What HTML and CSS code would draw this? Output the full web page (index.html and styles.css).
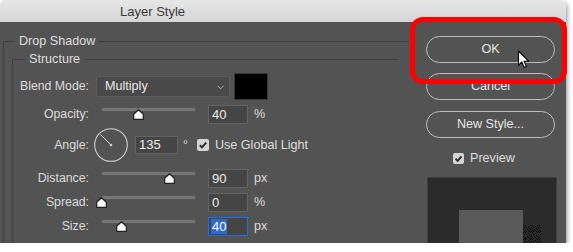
FILE: index.html
```html
<!DOCTYPE html>
<html>
<head>
<meta charset="utf-8">
<link rel="stylesheet" href="styles.css">
</head>
<body>
<div class="window">
  <div class="titlebar">Layer Style</div>
  <div class="body">
    <div class="left">
      <div class="group outer">
        <div class="group-title">Drop Shadow</div>
        <div class="group inner">
          <div class="group-title">Structure</div>
          <div class="row blend">
            <span class="label">Blend Mode:</span>
            <div class="select"><span>Multiply</span><svg class="chev" width="7" height="5" viewBox="0 0 7 5"><polyline points="0.5,0.8 3.5,3.8 6.5,0.8" fill="none" stroke="#b5b5b5" stroke-width="1"/></svg></div>
            <div class="swatch"></div>
          </div>
          <div class="row opacity">
            <span class="label">Opacity:</span>
            <div class="slider"><span class="thumb" style="left:39%"><svg width="11" height="11" viewBox="0 0 11 11"><path d="M5.5 0.8 L10.3 5.2 L10.3 10.3 L0.7 10.3 L0.7 5.2 Z" fill="#fff" stroke="#1e1e1e" stroke-width="1.2" stroke-linejoin="round"/></svg></span></div>
            <div class="field">40</div><span class="unit">%</span>
          </div>
          <div class="row angle">
            <span class="label">Angle:</span>
            <svg class="dial" width="34" height="34" viewBox="0 0 34 34"><circle cx="17" cy="17" r="16.3" fill="none" stroke="#cfcfcf" stroke-width="1.1"/><line x1="6.5" y1="6.5" x2="17" y2="17" stroke="#cfcfcf" stroke-width="1"/><circle cx="17" cy="17" r="1.3" fill="#cfcfcf"/></svg>
            <div class="field wide">135</div><span class="deg">°</span>
            <span class="cb"><svg width="12" height="12" viewBox="0 0 12 12"><polyline points="2.8,6.2 5,8.4 9.2,3.6" fill="none" stroke="#2b2b2b" stroke-width="2"/></svg></span>
            <span class="cb-label">Use Global Light</span>
          </div>
          <div class="row sl first">
            <span class="label">Distance:</span>
            <div class="slider"><span class="thumb" style="left:73%"><svg width="11" height="11" viewBox="0 0 11 11"><path d="M5.5 0.8 L10.3 5.2 L10.3 10.3 L0.7 10.3 L0.7 5.2 Z" fill="#fff" stroke="#1e1e1e" stroke-width="1.2" stroke-linejoin="round"/></svg></span></div>
            <div class="field">90</div><span class="unit">px</span>
          </div>
          <div class="row sl">
            <span class="label">Spread:</span>
            <div class="slider"><span class="thumb" style="left:-1%"><svg width="11" height="11" viewBox="0 0 11 11"><path d="M5.5 0.8 L10.3 5.2 L10.3 10.3 L0.7 10.3 L0.7 5.2 Z" fill="#fff" stroke="#1e1e1e" stroke-width="1.2" stroke-linejoin="round"/></svg></span></div>
            <div class="field">0</div><span class="unit">%</span>
          </div>
          <div class="row sl">
            <span class="label">Size:</span>
            <div class="slider"><span class="thumb" style="left:21%"><svg width="11" height="11" viewBox="0 0 11 11"><path d="M5.5 0.8 L10.3 5.2 L10.3 10.3 L0.7 10.3 L0.7 5.2 Z" fill="#fff" stroke="#1e1e1e" stroke-width="1.2" stroke-linejoin="round"/></svg></span></div>
            <div class="field focus"><span class="sel">40</span></div><span class="unit">px</span>
          </div>
        </div>
      </div>
    </div>
    <div class="actions">
      <div class="btn">OK</div>
      <div class="btn cancel">Cancel</div>
      <div class="btn newstyle">New Style...</div>
      <div class="preview-toggle">
        <span class="cb small"><svg width="11" height="11" viewBox="0 0 11 11"><polyline points="2.5,5.7 4.6,7.8 8.5,3.3" fill="none" stroke="#2b2b2b" stroke-width="1.9"/></svg></span>
        <span class="cb-label">Preview</span>
      </div>
      <div class="preview">
        <div class="preview-square"></div>
        <svg class="preview-shadow" width="18" height="40" viewBox="0 0 18 40">
          <defs>
            <pattern id="noise" width="7" height="7" patternUnits="userSpaceOnUse">
              <rect x="0" y="0" width="1" height="1" fill="#000"/>
              <rect x="2" y="0" width="1" height="1" fill="#000"/>
              <rect x="5" y="1" width="1" height="1" fill="#000"/>
              <rect x="1" y="2" width="1" height="1" fill="#000"/>
              <rect x="3" y="2" width="1" height="1" fill="#000"/>
              <rect x="6" y="3" width="1" height="1" fill="#000"/>
              <rect x="0" y="4" width="1" height="1" fill="#000"/>
              <rect x="4" y="4" width="1" height="1" fill="#000"/>
              <rect x="2" y="5" width="1" height="1" fill="#000"/>
              <rect x="5" y="5" width="1" height="1" fill="#000"/>
              <rect x="1" y="6" width="1" height="1" fill="#000"/>
              <rect x="3" y="6" width="1" height="1" fill="#000"/>
              <rect x="6" y="6" width="1" height="1" fill="#000"/>
            </pattern>
          </defs>
          <rect x="0" y="0" width="18" height="40" fill="url(#noise)"/>
        </svg>
      </div>
    </div>
  </div>
  <div class="highlight"></div>
  <svg class="cursor" width="13" height="19" viewBox="0 0 13 19"><path d="M1.5 1 L1.5 15.2 L4.8 12 L7.2 17.6 L9.4 16.6 L7.1 11.2 L11.6 11.2 Z" fill="#fff" stroke="#000" stroke-width="1.1" stroke-linejoin="round"/></svg>
</div>
</body>
</html>
```

FILE: styles.css
```css
html, body {
  margin: 0;
  background: #ffffff;
}

body {
  font-family: "Liberation Sans", Arial, sans-serif;
}

.window {
  position: relative;
  width: 566px;
  height: 243px;
  border-radius: 6px 6px 0 0;
  box-shadow: 1px 2px 5px rgba(0, 0, 0, 0.45);
}

.titlebar {
  height: 22px;
  box-sizing: border-box;
  padding-left: 120px;
  line-height: 23px;
  font-size: 13px;
  color: #3a3a3a;
  background: linear-gradient(#e7e7e7, #d5d5d5);
  border-radius: 6px 6px 0 0;
}

.body {
  display: flex;
  height: 221px;
  overflow: hidden;
  background: #535353;
  color: #dcdcdc;
  font-size: 12.3px;
}

.left {
  flex: none;
  width: 406px;
  padding: 19px 0 0 3px;
}

.group {
  border-top: 1px solid #3e3e3e;
  border-left: 1px solid #3e3e3e;
}

.outer {
  width: 405px;
  height: 300px;
}

.inner {
  width: 385px;
  height: 260px;
  margin: 11px 0 0 8px;
}

.group-title {
  width: fit-content;
  margin-top: -8px;
  padding: 0 4px;
  line-height: 14px;
  font-size: 12.6px;
  background: #535353;
  color: #dedede;
}

.outer > .group-title {
  margin-left: 11px;
}

.inner > .group-title {
  margin-left: 12px;
}

.row {
  display: flex;
  align-items: center;
  height: 28px;
}

.label {
  flex: none;
  width: 76px;
  text-align: right;
}

.blend {
  margin-top: 6px;
}

.select {
  display: flex;
  align-items: center;
  justify-content: space-between;
  box-sizing: border-box;
  width: 134px;
  height: 21px;
  margin-left: 7px;
  padding: 0 5px 0 8px;
  background: #494949;
  border: 1px solid #5c5c5c;
  border-radius: 2px;
  color: #e8e8e8;
  font-size: 12.6px;
}

.chev {
  margin-top: 2px;
}

.swatch {
  box-sizing: border-box;
  width: 34px;
  height: 27px;
  margin-left: 4px;
  background: #000;
  border: 1px solid #3a3a3a;
}

.slider {
  position: relative;
  flex: none;
  width: 93px;
  height: 12px;
  margin-left: 13px;
}

.slider::before {
  content: "";
  display: block;
  height: 3px;
  background: #767676;
}

.thumb {
  position: absolute;
  top: 1px;
  margin-left: -5.5px;
  width: 11px;
  height: 11px;
  line-height: 0;
}

.field {
  flex: none;
  box-sizing: border-box;
  width: 40px;
  height: 19px;
  margin-left: 13px;
  padding-left: 3px;
  line-height: 17px;
  font-size: 13px;
  color: #ededed;
  background: #454545;
  border: 1px solid #646464;
}

.unit {
  margin-left: 6px;
  font-size: 12.6px;
}

.angle {
  height: 34px;
}

.dial {
  flex: none;
  margin-left: 5px;
}

.field.wide {
  width: 43px;
  height: 18px;
  margin-left: 7px;
  line-height: 16px;
}

.deg {
  margin-left: 5px;
}

.cb {
  display: flex;
  flex: none;
  width: 12px;
  height: 12px;
  margin-left: 9px;
  border-radius: 2px;
  background: #d4d4d4;
}

.cb-label {
  margin-left: 6px;
  font-size: 12.6px;
  color: #dedede;
}

.row.sl {
  height: 24px;
}

.row.first {
  margin-top: 4px;
}

.field.focus {
  border-color: #1b72e8;
  padding-left: 2px;
}

.sel {
  display: inline-block;
  line-height: 15px;
  padding: 0 1px;
  background: #2e6bcf;
  color: #ffffff;
}

.actions {
  display: flex;
  flex-direction: column;
  flex: none;
  width: 129px;
  margin-left: 17px;
  padding-top: 14px;
}

.actions > * {
  flex: none;
}

.btn {
  box-sizing: border-box;
  height: 27px;
  line-height: 25px;
  text-align: center;
  border: 1px solid #bdbdbd;
  border-radius: 14px;
  font-size: 12.6px;
  color: #e6e6e6;
}

.cancel {
  margin-top: 10px;
}

.newstyle {
  margin-top: 11px;
}

.preview-toggle {
  display: flex;
  align-items: center;
  height: 20px;
  margin-top: 10px;
  padding-left: 27px;
}

.cb.small {
  width: 11px;
  height: 11px;
  margin-left: 0;
}

.preview {
  display: flex;
  align-items: flex-start;
  box-sizing: border-box;
  width: 130px;
  height: 90px;
  margin-top: 9px;
  margin-left: 1px;
  padding: 32px 0 0 31px;
  background: #2b2b2b;
  border: 1px solid #3f3f3f;
}

.preview-square {
  flex: none;
  width: 64px;
  height: 60px;
  background: #595959;
}

.preview-shadow {
  flex: none;
  margin-top: 15px;
}

.highlight {
  position: absolute;
  left: 410px;
  top: 17px;
  width: 157px;
  height: 67px;
  box-sizing: border-box;
  border: 5px solid #ff0000;
  border-radius: 13px;
}

.cursor {
  position: absolute;
  left: 517px;
  top: 50px;
}
```
